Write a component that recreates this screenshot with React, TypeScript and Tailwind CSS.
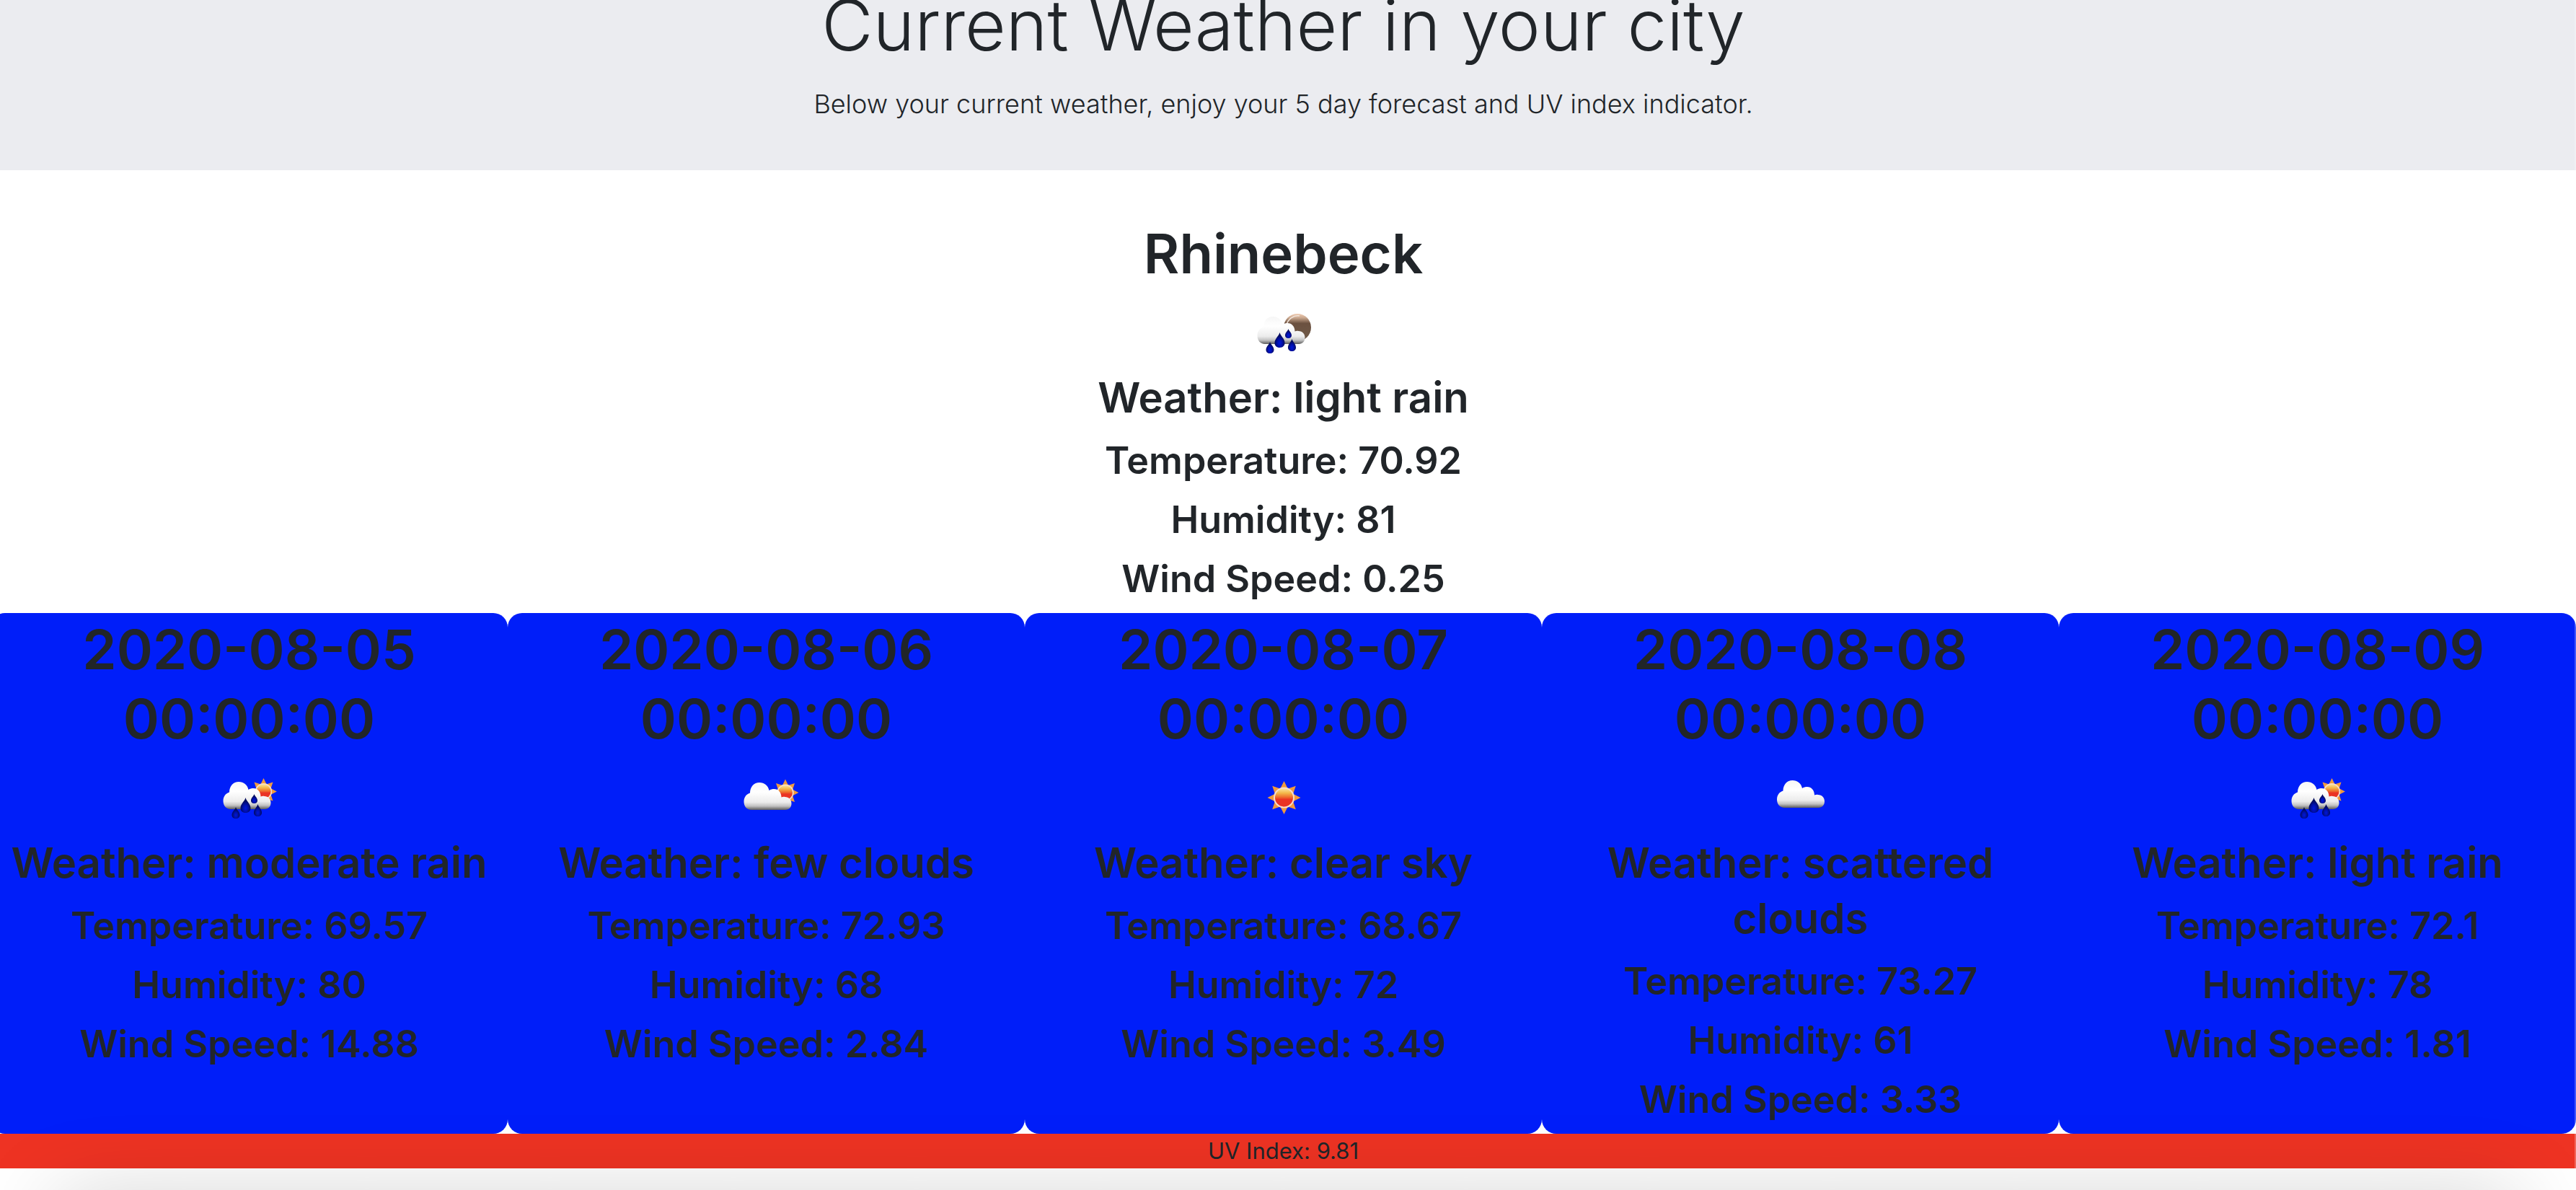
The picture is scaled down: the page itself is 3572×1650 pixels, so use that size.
import type { ReactNode } from "react";

type Kind = "rain-night" | "rain-day" | "few" | "clear" | "clouds";

type Reading = {
  title: string;
  kind: Kind;
  weather: string;
  temperature: string;
  humidity: string;
  wind: string;
};

const current: Reading = {
  title: "Rhinebeck",
  kind: "rain-night",
  weather: "light rain",
  temperature: "70.92",
  humidity: "81",
  wind: "0.25",
};

const forecast: Reading[] = [
  { title: "2020-08-05 00:00:00", kind: "rain-day", weather: "moderate rain", temperature: "69.57", humidity: "80", wind: "14.88" },
  { title: "2020-08-06 00:00:00", kind: "few", weather: "few clouds", temperature: "72.93", humidity: "68", wind: "2.84" },
  { title: "2020-08-07 00:00:00", kind: "clear", weather: "clear sky", temperature: "68.67", humidity: "72", wind: "3.49" },
  { title: "2020-08-08 00:00:00", kind: "clouds", weather: "scattered clouds", temperature: "73.27", humidity: "61", wind: "3.33" },
  { title: "2020-08-09 00:00:00", kind: "rain-day", weather: "light rain", temperature: "72.1", humidity: "78", wind: "1.81" },
];

function IconDefs() {
  return (
    <svg width="0" height="0" className="absolute" aria-hidden="true">
      <defs>
        <linearGradient id="cloudFill" gradientUnits="userSpaceOnUse" x1="0" y1="26" x2="0" y2="64">
          <stop offset="0" stopColor="#f6f6f6" />
          <stop offset="0.35" stopColor="#ffffff" />
          <stop offset="0.72" stopColor="#ececec" />
          <stop offset="0.86" stopColor="#c2c2c2" />
          <stop offset="0.95" stopColor="#808080" />
          <stop offset="1" stopColor="#5c5c5c" />
        </linearGradient>
        <linearGradient id="sunFill" x1="0" y1="0" x2="0" y2="1">
          <stop offset="0" stopColor="#fbe49a" />
          <stop offset="0.25" stopColor="#f4b648" />
          <stop offset="0.48" stopColor="#ee6a2c" />
          <stop offset="0.6" stopColor="#ea3323" />
          <stop offset="1" stopColor="#ea3323" />
        </linearGradient>
        <linearGradient id="moonFill" x1="0" y1="0" x2="0" y2="1">
          <stop offset="0" stopColor="#f0cdb4" />
          <stop offset="0.15" stopColor="#c9a78e" />
          <stop offset="0.35" stopColor="#6b5140" />
          <stop offset="1" stopColor="#6f5a49" />
        </linearGradient>
        <radialGradient id="dropFill" cx="0.5" cy="0.7" r="0.5">
          <stop offset="0" stopColor="#0018d8" />
          <stop offset="0.45" stopColor="#0010b0" />
          <stop offset="1" stopColor="#000a5c" />
        </radialGradient>
      </defs>
    </svg>
  );
}

function Cloud() {
  return (
    <path
      fill="url(#cloudFill)"
      d="M24 64C17.5 64 13.5 59 13.5 52.5C13.5 46.5 17 42 22 40.5C22 32 27.500 26 35 26C42 26 47 30 48.500 37C50.500 35.500 53 35 55.500 35C61 35 65.500 39.500 65.500 46.500C67 45.800 69 45.500 70.500 46C76 46 79.500 50 79.500 55C79.500 60.500 76 64 71 64Z"
    />
  );
}

function Sun({ x, y, scale }: { x: number; y: number; scale: number }) {
  const angles = [0, 45, 90, 135, 180, 225, 270, 315];
  return (
    <g transform={`translate(${x} ${y}) scale(${scale})`}>
      {angles.map((angle) => (
        <path key={angle} d="M-5.500 -12L0 -23L5.500 -12Z" fill="#f09a3e" transform={`rotate(${angle})`} />
      ))}
      <circle r="14.500" fill="#f6dccb" />
      <circle r="12.500" fill="url(#sunFill)" />
    </g>
  );
}

function Drop({ x, y, w, h }: { x: number; y: number; w: number; h: number }) {
  return (
    <path
      transform={`translate(${x} ${y}) scale(${w / 10} ${h / 16})`}
      d="M0 0C1 4 5 6.500 5 11C5 14 3 16 0 16C-3 16 -5 14 -5 11C-5 6.500 -1 4 0 0Z"
      fill="url(#dropFill)"
    />
  );
}

function Rain() {
  return (
    <>
      <Drop x={31} y={61} w={11} h={16} />
      <Drop x={44.5} y={48} w={14} h={21} />
      <Drop x={56.5} y={43} w={9} h={13} />
      <Drop x={61.5} y={57} w={11} h={17} />
    </>
  );
}

function WeatherIcon({ kind, label }: { kind: Kind; label: string }) {
  let art: ReactNode;
  if (kind === "rain-night") {
    art = (
      <>
        <circle cx="69" cy="41" r="19" fill="url(#moonFill)" />
        <path d="M54 38A16 16 0 0 1 72 25" fill="none" stroke="#f1e4da" strokeWidth="1.500" />
        <Cloud />
        <Rain />
      </>
    );
  } else if (kind === "rain-day") {
    art = (
      <>
        <Sun x={69.5} y={39.5} scale={0.8} />
        <Cloud />
        <Rain />
      </>
    );
  } else if (kind === "few") {
    art = (
      <>
        <Sun x={76} y={41} scale={0.8} />
        <g transform="translate(5 1)">
          <Cloud />
        </g>
      </>
    );
  } else if (kind === "clear") {
    art = <Sun x={50.5} y={48} scale={1} />;
  } else {
    art = (
      <g transform="translate(3.500 -2)">
        <Cloud />
      </g>
    );
  }
  return (
    <svg viewBox="0 0 100 100" role="img" aria-label={label} className="mx-auto block size-[100px]">
      {art}
    </svg>
  );
}

function Report({ reading }: { reading: Reading }) {
  return (
    <div className="pt-0.5 pb-3.5 text-center font-[560]">
      <h2 className="mx-auto mb-3.5 max-w-[600px] text-[76px] leading-24">{reading.title}</h2>
      <WeatherIcon kind={reading.kind} label={reading.weather} />
      <h3 className="mb-4 text-[58px] leading-[77px]">Weather: {reading.weather}</h3>
      <div className="flex flex-col gap-4 text-[52px] leading-[66px]">
        <p>Temperature: {reading.temperature}</p>
        <p>Humidity: {reading.humidity}</p>
        <p>Wind Speed: {reading.wind}</p>
      </div>
    </div>
  );
}

export default function App() {
  return (
    <div className="relative min-h-screen overflow-hidden bg-white font-['Inter',sans-serif] text-[#212529]">
      <IconDefs />
      <div className="-ml-[13px]">
        <header className="overflow-hidden bg-[#ebecf0] pb-[62px] text-center">
          <h1 className="-mt-8 mb-3 text-[98px] leading-[134px] font-[350]">Current Weather in your city</h1>
          <p className="text-[36px] leading-[60px] font-[350]">
            Below your current weather, enjoy your 5 day forecast and UV index indicator.
          </p>
        </header>
        <main>
          <section className="pt-[65px]">
            <Report reading={current} />
          </section>
          <section className="grid grid-cols-5">
            {forecast.map((day) => (
              <article key={day.title} className="rounded-[20px] bg-[#001ef9]">
                <Report reading={day} />
              </article>
            ))}
          </section>
          <p className="bg-[#ee3323] text-center text-[31px] leading-12">UV Index: 9.81</p>
        </main>
      </div>
      <div className="pointer-events-none absolute inset-x-20 -bottom-24 h-20 shadow-[0_0_120px_rgba(0,0,0,0.22)]" />
      <div className="pointer-events-none absolute inset-y-0 right-0 w-0.5 bg-white/25" />
    </div>
  );
}
